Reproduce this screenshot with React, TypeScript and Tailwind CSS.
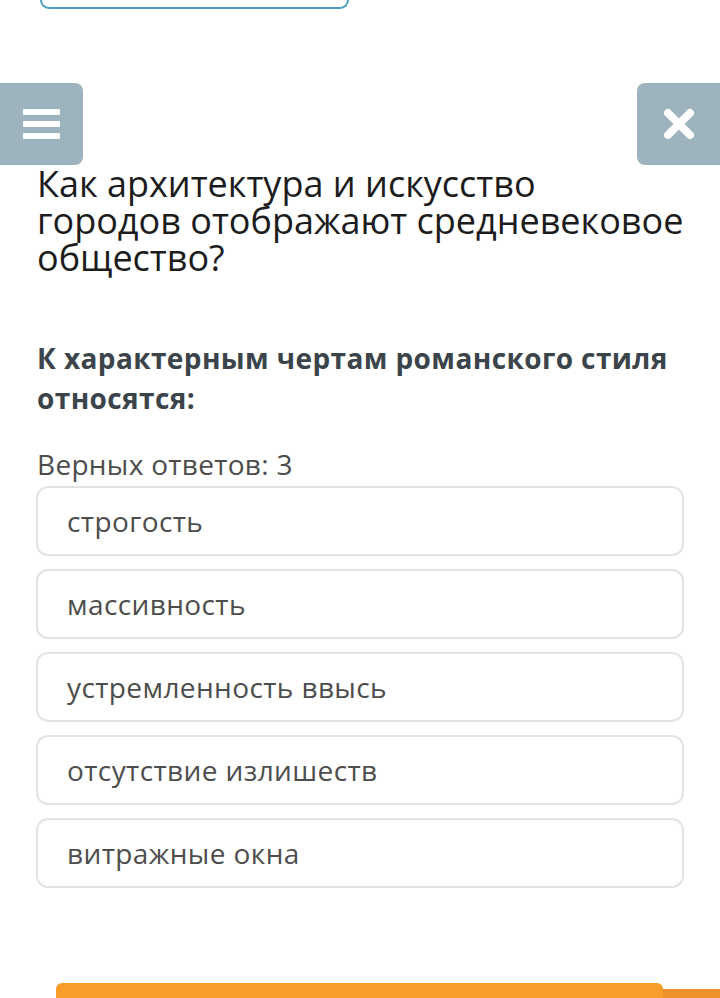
export default function App() {
  const options = [
    "строгость",
    "массивность",
    "устремленность ввысь",
    "отсутствие излишеств",
    "витражные окна",
  ];
  return (
    <div className="relative w-[720px] h-[998px] overflow-hidden bg-white" style={{ fontFamily: '"Open Sans", "Noto Sans", sans-serif' }}>
      <div className="ml-[40px] w-[309px] h-[9px] border-2 border-t-0 border-[#4a9fc0] rounded-b-[10px]" />
      <div className="mt-[74px] flex justify-between h-[82px]">
        <div className="w-[83px] h-[82px] bg-[#9db4bf] rounded-r-[8px] flex flex-col justify-center pl-[23px] gap-[6px]">
          <div className="w-[37px] h-[6px] bg-white rounded-[1px]" />
          <div className="w-[37px] h-[6px] bg-white rounded-[1px]" />
          <div className="w-[37px] h-[6px] bg-white rounded-[1px]" />
        </div>
        <div className="w-[83px] h-[82px] bg-[#9db4bf] rounded-l-[8px] flex items-center justify-center">
          <svg width="32" height="32" viewBox="0 0 32 32">
            <path d="M5 5 L27 27 M27 5 L5 27" stroke="white" strokeWidth="8" strokeLinecap="round" />
          </svg>
        </div>
      </div>
      <div className="pl-[37px] pr-[20px]">
        <h1 className="text-[36px] leading-[37px] text-[#1c1c1c] font-normal font-stretch-[89%] whitespace-nowrap">
          Как архитектура и искусство
          <br />
          городов отображают средневековое
          <br />
          общество?
        </h1>
        <p className="mt-[62px] pr-[10px] text-[28px] leading-[40px] font-bold text-[#3b444a] font-stretch-[92%] tracking-[0.4px]">
          К характерным чертам романского стиля относятся:
        </p>
        <p className="mt-[28px] text-[28px] leading-[36px] text-[#4d4d4d] font-stretch-[91%] tracking-[0.3px]">
          Верных ответов: 3
        </p>
      </div>
      <div className="mt-[4px] ml-[36px] w-[648px] flex flex-col gap-[13px]">
        {options.map((o) => (
          <div key={o} className="h-[70px] border-2 border-[#e2e4e4] rounded-[12px] flex items-center pl-[29px] text-[28px] text-[#4d4d4d] font-stretch-[91%] tracking-[0.4px]">
            {o}
          </div>
        ))}
      </div>
      <div className="absolute left-[620px] top-[989px] w-[110px] h-[20px] bg-[#f0922c] rounded-tl-[6px]" />
      <div className="absolute left-[56px] top-[983px] w-[607px] h-[20px] bg-[#f99d2a] rounded-t-[6px]" />
    </div>
  );
}
